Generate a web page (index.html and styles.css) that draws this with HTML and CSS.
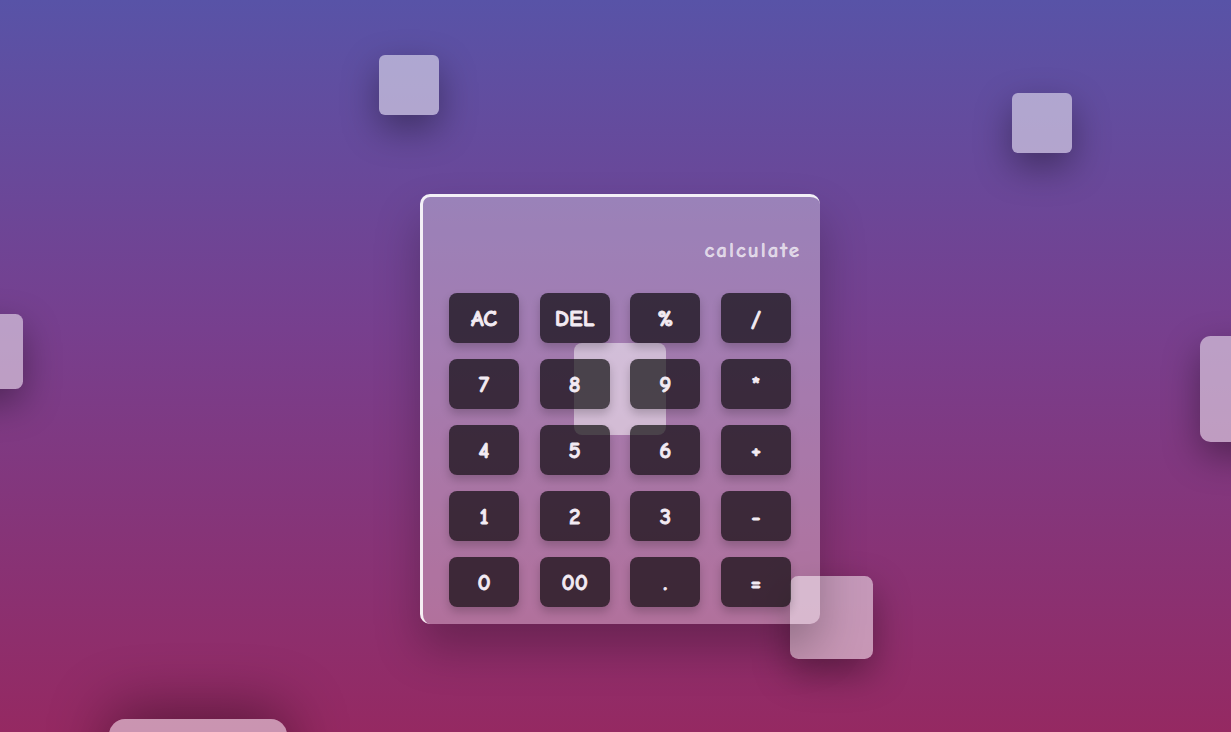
FILE: index.html
```html
<!DOCTYPE html>
<html lang="en">
<head>
<meta charset="utf-8">
<title>Glass Calculator</title>
<link rel="stylesheet" href="styles.css">
</head>
<body>
  <div class="square sq1"></div>
  <div class="square sq2"></div>
  <div class="square sq3"></div>
  <div class="square sq4"></div>
  <div class="square sq5"></div>
  <div class="square sq7"></div>
  <main class="stage">
    <div class="calculator">
      <div class="square sq6"></div>
      <div class="display"><span class="placeholder">calculate</span></div>
      <div class="keys">
        <button class="key">AC</button>
        <button class="key">DEL</button>
        <button class="key">%</button>
        <button class="key">/</button>
        <button class="key">7</button>
        <button class="key">8</button>
        <button class="key">9</button>
        <button class="key">*</button>
        <button class="key">4</button>
        <button class="key">5</button>
        <button class="key">6</button>
        <button class="key">+</button>
        <button class="key">1</button>
        <button class="key">2</button>
        <button class="key">3</button>
        <button class="key">-</button>
        <button class="key">0</button>
        <button class="key">00</button>
        <button class="key">.</button>
        <button class="key">=</button>
      </div>
    </div>
  </main>
</body>
</html>
```

FILE: styles.css
```css
* { box-sizing: border-box; }

html, body { height: 100%; }

body {
  margin: 0;
  overflow: hidden;
  position: relative;
  background: linear-gradient(to bottom, #5853a7 0%, #773f8e 45%, #952962 100%);
  font-family: "Comic Sans MS", "Comic Neue", "DejaVu Sans", sans-serif;
}

.stage {
  padding: 194px 0 0 420px;
  position: relative;
  z-index: 2;
}

.square {
  position: absolute;
  background: rgba(255, 255, 255, 0.5);
  border-radius: 10%;
  box-shadow: 0 14px 36px rgba(0, 0, 0, 0.36);
  z-index: 1;
}
.sq1 { left: 379px; top: 55px; width: 60px; height: 60px; }
.sq2 { left: 1012px; top: 93px; width: 60px; height: 60px; }
.sq3 { left: -52px; top: 314px; width: 75px; height: 75px; }
.sq4 { left: 1200px; top: 336px; width: 106px; height: 106px; }
.sq5 { left: 790px; top: 576px; width: 83px; height: 83px; }
.sq7 { left: 109px; top: 719px; width: 178px; height: 178px; border-radius: 16px; box-shadow: 0 -10px 60px rgba(0, 0, 0, 0.4); }
.sq6 {
  left: 151px; top: 146px; width: 92px; height: 92px;
  border-radius: 8px;
  box-shadow: none;
  z-index: 0;
}

.calculator {
  position: relative;
  width: 400px;
  height: 430px;
  background: rgba(255, 255, 255, 0.32);
  border-top: 3px solid rgba(255, 255, 255, 0.88);
  border-left: 3px solid rgba(255, 255, 255, 0.88);
  border-radius: 10px;
  box-shadow: 0 25px 45px rgba(0, 0, 0, 0.25);
  padding: 0 29px 17px 26px;
}

.display {
  height: 96px;
  display: flex;
  align-items: center;
  justify-content: flex-end;
  padding-top: 10px;
  margin-right: -10px;
}
.placeholder {
  color: rgba(255, 255, 255, 0.68);
  font-size: 21px;
  letter-spacing: 2px;
  font-weight: bold;
  -webkit-text-stroke: 0.4px rgba(255, 255, 255, 0.68);
}

.keys {
  position: relative;
  z-index: 1;
  display: grid;
  grid-template-columns: repeat(4, 70px);
  grid-auto-rows: 50px;
  justify-content: space-between;
  row-gap: 16px;
}

.key {
  border: none;
  margin: 0;
  padding: 0;
  border-radius: 8px;
  background: rgba(0, 0, 0, 0.65);
  color: #f3ebf3;
  font-family: inherit;
  font-size: 23px;
  font-weight: bold;
  -webkit-text-stroke: 0.8px #f3ebf3;
  box-shadow: 0 5px 10px rgba(0, 0, 0, 0.2);
}
```
